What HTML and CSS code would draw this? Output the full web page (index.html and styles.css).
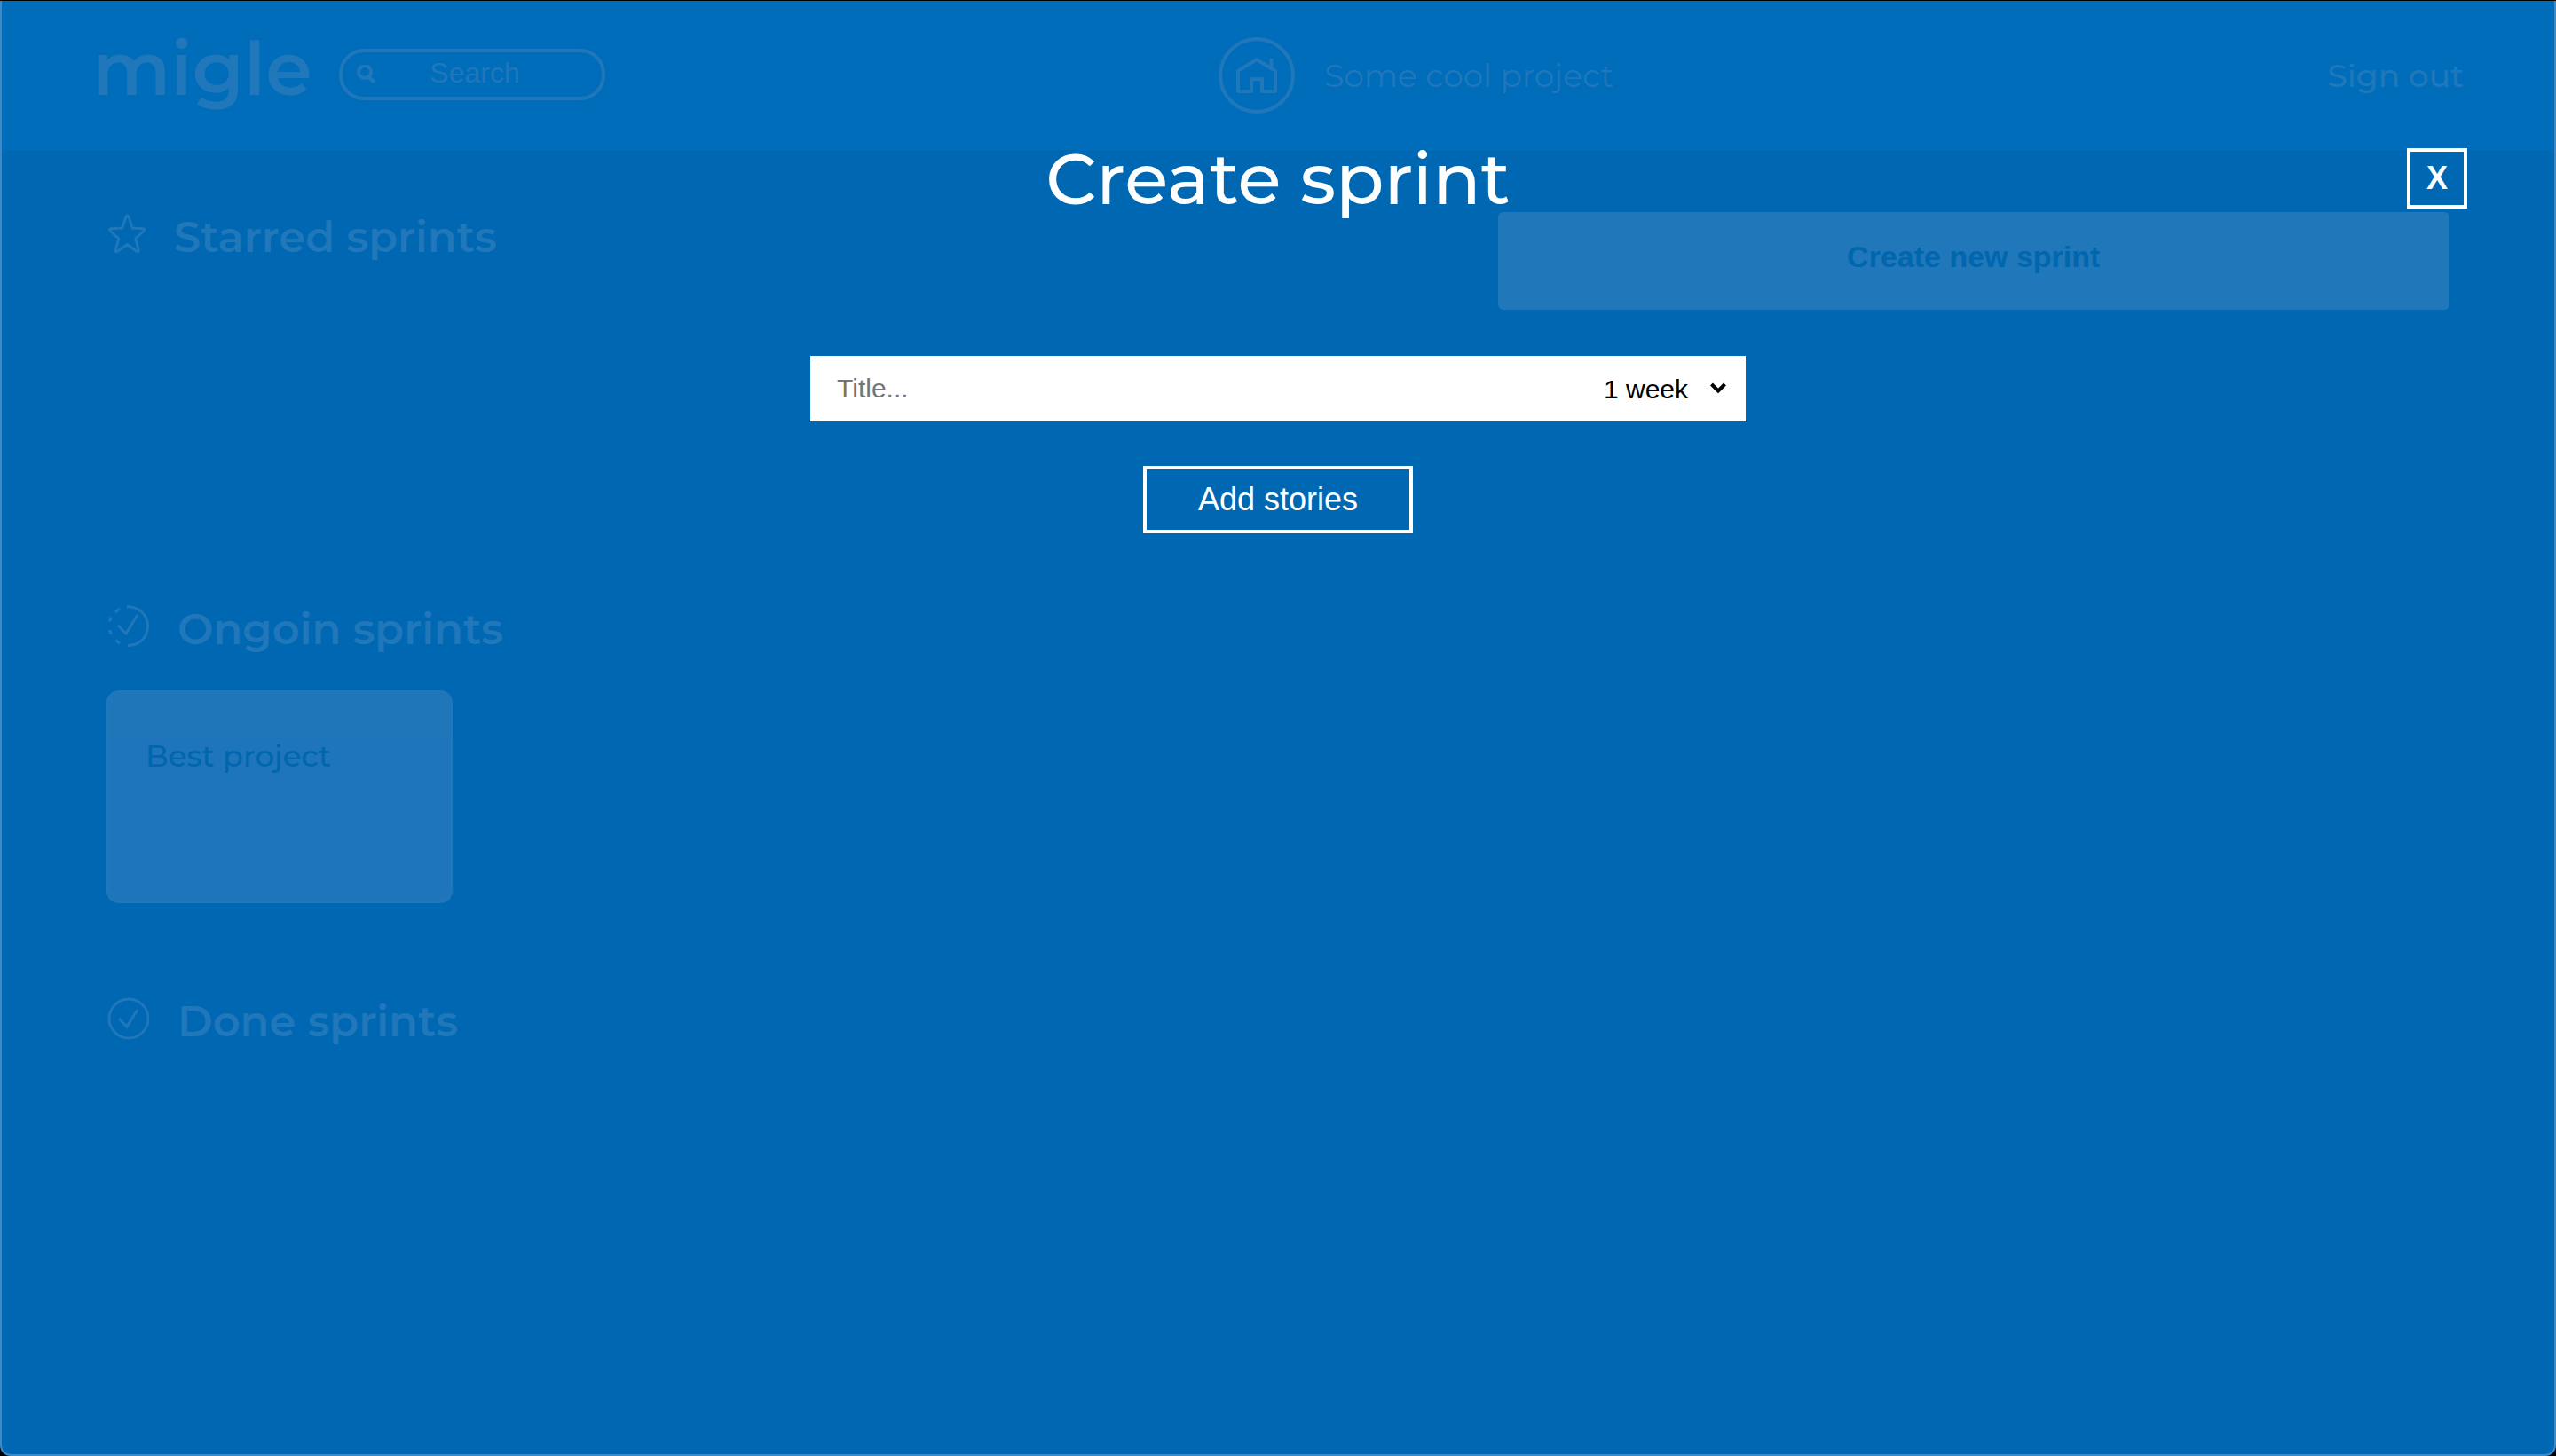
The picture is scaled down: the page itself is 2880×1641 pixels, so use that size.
FILE: index.html
```html
<!DOCTYPE html>
<html lang="en">
<head>
<meta charset="utf-8">
<meta name="viewport" content="width=device-width, initial-scale=1">
<title>migle</title>
<link rel="stylesheet" href="styles.css">
</head>
<body>
<div class="page">
  <header class="topbar">
    <div class="brand">
      <a class="logo" href="#">migle</a>
      <label class="search">
        <svg class="search-icon" viewBox="0 0 22 22" aria-hidden="true"><circle cx="9" cy="8" r="7"/><path d="M13 13l7 7"/></svg>
        <input class="search-input" type="search" placeholder="Search" aria-label="Search">
      </label>
    </div>
    <nav class="nav">
      <div class="project">
        <a class="home" href="#" aria-label="Home">
          <svg class="home-icon" viewBox="0 0 46 42" aria-hidden="true"><path d="M2 16L23 3l21 13v23H29V25H17v14H2zM39.500 2v11"/></svg>
        </a>
        <span class="project-name">Some cool project</span>
      </div>
      <a class="signout" href="#">Sign out</a>
    </nav>
  </header>

  <main class="board">
    <section class="sprints sprints-starred">
      <h2 class="heading">
        <svg class="icon icon-star" viewBox="0 0 44 56" aria-hidden="true"><path d="M22 9.500q1.500-3.500 3 0l4.300 12.500 11.500.7q3.500.4 1 2.800L32.800 34l3.300 12.500q.6 3.300-2.500 1.600L23.500 40.500 13 48q-3.300 1.800-2.500-1.600L13.800 34 4.500 25.500q-2.500-2.400 1-2.800l12.200-.7z"/></svg>
        Starred sprints
      </h2>
      <button class="create" type="button">Create new sprint</button>
    </section>
    <section class="sprints">
      <h2 class="heading">
        <svg class="icon" viewBox="0 0 48 56" aria-hidden="true"><path d="M23 6.500c13 0 23.500 9 23.500 22S37 50.500 24 50.500M15 9l-5 4M5.500 18.500l-2 5M3.500 33l2 5M10.500 44.500l4.500 4M13 28l9 9 13-21"/></svg>
        Ongoin sprints
      </h2>
      <a class="card" href="#">Best project</a>
    </section>
    <section class="sprints">
      <h2 class="heading">
        <svg class="icon" viewBox="0 0 48 56" aria-hidden="true"><circle cx="25" cy="29" r="22"/><path d="M14 29l9 9 12-19"/></svg>
        Done sprints
      </h2>
    </section>
  </main>

  <div class="modal" role="dialog" aria-labelledby="modal-title">
    <div class="modal-head">
      <h1 class="modal-title" id="modal-title">Create sprint</h1>
      <button class="close" type="button" aria-label="Close">X</button>
    </div>
    <form class="form">
      <div class="field">
        <input class="title-input" type="text" placeholder="Title..." aria-label="Title">
        <div class="duration">
          <select class="duration-select" aria-label="Duration">
            <option>1 week</option>
            <option>2 weeks</option>
            <option>3 weeks</option>
            <option>4 weeks</option>
          </select>
          <svg class="chevron" viewBox="0 0 18 12" aria-hidden="true"><path d="M1.500 2L9 9.500 16.500 2"/></svg>
        </div>
      </div>
      <button class="add" type="button">Add stories</button>
    </form>
  </div>
</div>
</body>
</html>
```
FILE: styles.css
```css
:root {
  --blue: #0067b3;
  --blue-bar: #006dbb;
  --muted: #2077ba;
  --ink: #0066ad;
  --display: Montserrat, Inter, sans-serif;
  --ui: Arial, "Liberation Sans", sans-serif;
}

* {
  box-sizing: border-box;
}

html {
  background: #000;
}

body {
  margin: 0;
  padding-top: 1px;
  font-family: var(--display);
  color: var(--muted);
}

.page {
  position: relative;
  min-height: calc(100vh - 1px);
  overflow: hidden;
  border-radius: 0 0 12px 12px;
  background: var(--blue);
}

/* thin light rim of the window */
.page::after {
  content: "";
  position: absolute;
  inset: 0;
  border: solid #4189c4;
  border-width: 0 2px 2px;
  border-radius: 0 0 12px 12px;
  pointer-events: none;
}

a {
  color: inherit;
  text-decoration: none;
}

button,
input,
select {
  margin: 0;
  border: 0;
  border-radius: 0;
  background: none;
  font-family: var(--ui);
  outline: 0;
}

svg {
  display: block;
  flex: none;
  fill: none;
  stroke: currentColor;
}

/* top bar */
.topbar {
  display: grid;
  grid-template-columns: 19fr 21fr;
  align-items: center;
  height: 168px;
  padding: 0 104px;
  background: var(--blue-bar);
}

.brand,
.nav,
.project {
  display: flex;
  align-items: center;
}

.brand {
  gap: 30px;
  padding-bottom: 2px;
}

.logo {
  padding-bottom: 14px;
  font-size: 84px;
  font-weight: 600;
  line-height: 96px;
}

.search {
  display: flex;
  align-items: center;
  width: 300px;
  height: 58px;
  padding: 0 6px 0 16px;
  border: 4px solid;
  border-radius: 28px;
}

.search-icon {
  width: 22px;
  height: 22px;
  stroke-width: 4;
}

.search-input {
  flex: 1;
  min-width: 0;
  height: 50px;
  padding: 0 0 4px;
  font-size: 32px;
  text-align: center;
}

.search-input::placeholder {
  color: var(--muted);
  opacity: 1;
}

.nav {
  justify-content: space-between;
  padding-bottom: 1px;
  font-size: 36px;
}

.project {
  gap: 33px;
}

.home {
  display: grid;
  place-items: center;
  width: 86px;
  height: 86px;
  border: 4px solid;
  border-radius: 50%;
}

.home-icon {
  width: 46px;
  height: 42px;
  stroke-width: 4;
  stroke-linejoin: round;
}

.signout {
  font-weight: 500;
}

/* sprint lists */
.board {
  padding: 66px 120px 0;
}

.sprints {
  min-height: 442px;
}

.sprints-starred {
  display: grid;
  grid-template-columns: 19fr 13fr;
  align-items: start;
}

.heading {
  display: flex;
  gap: 32px;
  margin: 0;
  font-size: 48px;
  font-weight: 600;
  line-height: 64px;
}

.icon {
  width: 48px;
  height: 56px;
  stroke-width: 3;
}

.icon-star {
  width: 44px;
}

.create {
  height: 110px;
  margin-top: 4px;
  padding: 0 0 10px;
  border-radius: 6px;
  background: var(--muted);
  color: var(--ink);
  font-size: 34px;
  font-weight: 700;
}

.card {
  display: block;
  width: 390px;
  height: 240px;
  margin-top: 37px;
  padding: 49px 41px;
  border: 3px solid var(--muted);
  border-radius: 14px;
  background: linear-gradient(#1f76b8 50px, #1f75bc 50px);
  color: var(--ink);
  font-size: 34px;
  font-weight: 500;
  line-height: 44px;
}

/* dialog */
.modal {
  position: absolute;
  inset: 0;
  padding: 166px 100px 0;
  color: #fff;
}

.modal-head {
  display: grid;
  grid-template-columns: 1fr auto 1fr;
  align-items: center;
}

.modal-title {
  grid-column: 2;
  margin: 0;
  padding-top: 2px;
  font-size: 80px;
  font-weight: 500;
  line-height: 66px;
}

.close {
  justify-self: end;
  width: 68px;
  height: 68px;
  padding: 0;
  border: 4px solid #fff;
  color: #fff;
  font-size: 36px;
  font-weight: 700;
}

.form {
  display: flex;
  flex-direction: column;
  align-items: center;
  gap: 50px;
  margin-top: 166px;
}

.field {
  display: flex;
  width: 100%;
  max-width: 1054px;
  height: 74px;
  background: #fff;
}

.title-input {
  flex: 1;
  min-width: 0;
  padding: 0 30px;
  font-size: 30px;
}

.title-input::placeholder {
  color: #757575;
  opacity: 1;
}

.duration {
  position: relative;
  display: flex;
}

.duration-select {
  appearance: none;
  width: 160px;
  color: #000;
  font-size: 30px;
}

.chevron {
  position: absolute;
  top: 30px;
  right: 22px;
  width: 18px;
  height: 12px;
  color: #000;
  stroke-width: 4;
  pointer-events: none;
}

.add {
  width: 304px;
  height: 76px;
  padding: 0;
  border: 4px solid #fff;
  color: #fff;
  font-size: 36px;
}
```
